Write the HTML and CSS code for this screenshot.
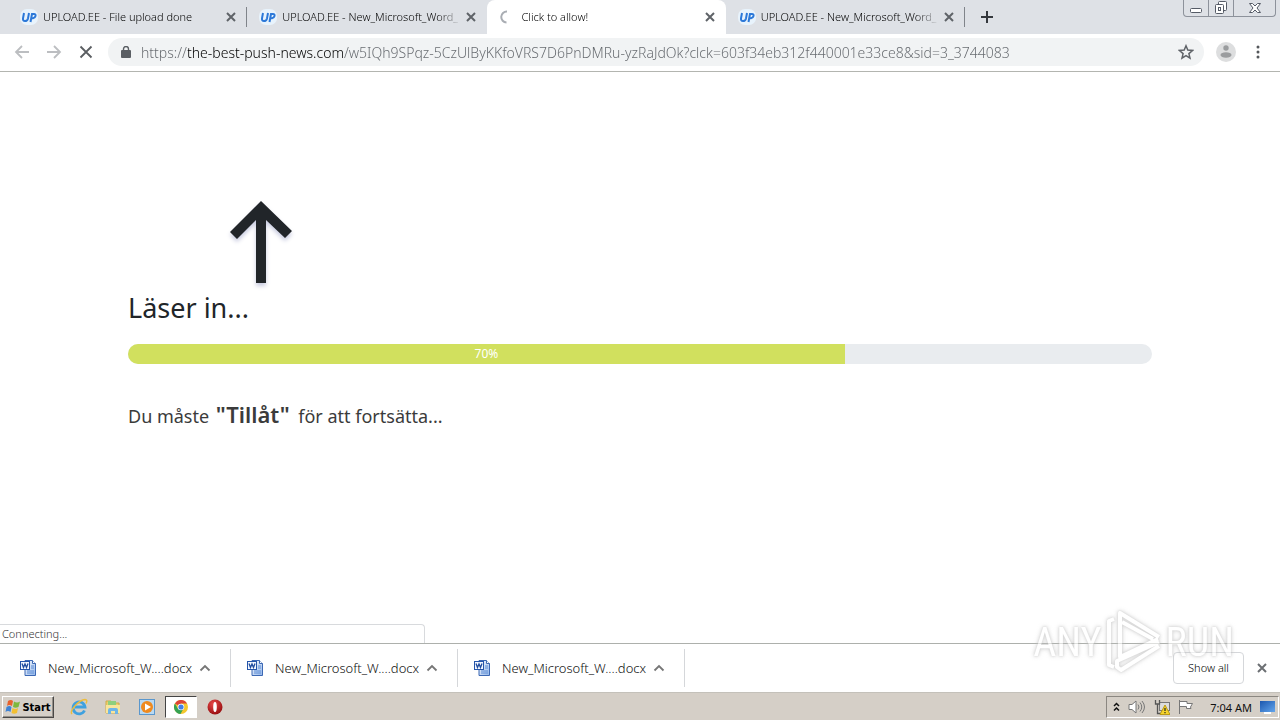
FILE: index.html
```html
<!DOCTYPE html>
<html lang="sv">
<head>
<meta charset="utf-8">
<meta name="viewport" content="width=device-width, initial-scale=1">
<title>Click to allow!</title>
<link rel="stylesheet" href="styles.css">
</head>
<body>
<svg class="defs" width="0" height="0" aria-hidden="true">
  <defs>
    <linearGradient id="page-blue" x1="0" y1="0" x2="1" y2="1"><stop offset="0" stop-color="#fff"/><stop offset="1" stop-color="#8fb4ea"/></linearGradient>
    <radialGradient id="opera-red" cx=".4" cy=".3" r=".8"><stop offset="0" stop-color="#e84a4a"/><stop offset="1" stop-color="#8e0608"/></radialGradient>
    <linearGradient id="screen-blue" x1="0" y1="0" x2="1" y2="1"><stop offset="0" stop-color="#1c57ae"/><stop offset="1" stop-color="#63a5ec"/></linearGradient>
    <symbol id="close" viewBox="0 0 10 10"><path d="M1 1l8 8M9 1l-8 8" fill="none" stroke="currentColor" stroke-width="2"/></symbol>
    <symbol id="up" viewBox="0 0 20 16"><rect x="1" y="0" width="18" height="16" rx="7" fill="#e8f3fc"/><g fill="none" stroke="#2c78d8" stroke-width="2"><path d="M5 4L4 9.400Q3.700 12 6 12T9 9.400L10 4"/><path d="M11.500 13L13 5H15Q17 5 16.500 7T14 9.300H12.400"/></g></symbol>
    <symbol id="word" viewBox="0 0 16 16"><path d="M5 .5h7.500l3 3v12H5z" fill="url(#page-blue)" stroke="#3c68b4"/><path d="M12.500.5v3h3" fill="#fff" stroke="#3c68b4"/><path d="M11 6h3M11 8h3M7 11h7M7 13h7" stroke="#5c8cd4"/><rect x=".5" y="1.500" width="9" height="8" fill="#f4f8ff" stroke="#2455aa"/><path d="M2 3.500l1.500 4L5 4l1.500 3.500 1.500-4" fill="none" stroke="#204d9f" stroke-width="1.300"/></symbol>
    <symbol id="chevron" viewBox="0 0 12 8"><path d="M1.500 6.500L6 2l4.500 4.500" fill="none" stroke="#767676" stroke-width="1.800"/></symbol>
  </defs>
</svg>
<div class="screen">
  <header>
    <div class="tabstrip">
      <div class="tabs">
        <div class="tab"><svg class="fav"><use href="#up"/></svg><span class="tab-title">UPLOAD.EE - File upload done</span><button class="tab-close" aria-label="Close tab"><svg><use href="#close"/></svg></button></div>
        <div class="tab no-sep"><svg class="fav"><use href="#up"/></svg><span class="tab-title">UPLOAD.EE - New_Microsoft_Word_</span><button class="tab-close" aria-label="Close tab"><svg><use href="#close"/></svg></button></div>
        <div class="tab active"><svg class="fav" viewBox="0 0 20 16"><path d="M9 2.500A5.500 5.500 0 0 0 8.500 13.500" fill="none" stroke="#a9adb3" stroke-width="2"/></svg><span class="tab-title">Click to allow!</span><button class="tab-close" aria-label="Close tab"><svg><use href="#close"/></svg></button></div>
        <div class="tab"><svg class="fav"><use href="#up"/></svg><span class="tab-title">UPLOAD.EE - New_Microsoft_Word_</span><button class="tab-close" aria-label="Close tab"><svg><use href="#close"/></svg></button></div>
      </div>
      <button class="new-tab" aria-label="New tab"><svg width="12" height="12" viewBox="0 0 12 12"><path d="M6 0v12M0 6h12" stroke="#34383d" stroke-width="2"/></svg></button>
      <div class="window-buttons">
        <button aria-label="Minimize"><svg width="14" height="14" viewBox="0 0 14 14"><rect x="1.500" y="7.500" width="11" height="4" rx="1" fill="#fff" stroke="#555b66"/></svg></button>
        <button aria-label="Restore"><svg width="14" height="14" viewBox="0 0 14 14" fill="#fff" stroke="#555b66"><rect x="4.500" y=".5" width="8" height="9" rx="1"/><rect x="1.500" y="3.500" width="8" height="9" rx="1"/><rect x="4.500" y="6.500" width="2" height="3"/></svg></button>
        <button aria-label="Close"><svg width="14" height="14" viewBox="0 0 14 14"><path d="M1.500 2.500h3L7 5l2.500-2.500h3L9 7l3.500 4.500h-3L7 9l-2.500 2.500h-3L5 7z" fill="#fff" stroke="#555b66"/></svg></button>
      </div>
    </div>
    <div class="toolbar">
      <button class="nav" aria-label="Back"><svg width="16" height="16" viewBox="0 0 16 16"><path d="M15 8H2M8 2L2 8l6 6" fill="none" stroke="#bcbec1" stroke-width="1.800"/></svg></button>
      <button class="nav" aria-label="Forward"><svg width="16" height="16" viewBox="0 0 16 16"><path d="M1 8h13M8 2l6 6-6 6" fill="none" stroke="#bcbec1" stroke-width="1.800"/></svg></button>
      <button class="nav" aria-label="Stop"><svg width="14" height="14" viewBox="0 0 14 14"><path d="M1.500 1.500l11 11M12.500 1.500l-11 11" stroke="#5a5d61" stroke-width="1.800"/></svg></button>
      <div class="omnibox">
        <svg width="10" height="12" viewBox="0 0 10 12"><rect y="4" width="10" height="8" rx="1" fill="#5a5e63"/><path d="M2.500 5V3a2.500 2.500 0 0 1 5 0v2" fill="none" stroke="#5a5e63" stroke-width="1.400"/></svg>
        <input class="url" type="text" aria-label="Address" value="https://the-best-push-news.com/w5IQh9SPqz-5CzUlByKKfoVRS7D6PnDMRu-yzRaJdOk?clck=603f34eb312f440001e33ce8&amp;sid=3_3744083">
        <button class="star" aria-label="Bookmark"><svg width="16" height="16" viewBox="0 0 16 16"><path d="M8 1.800l1.800 4.300 4.700.4-3.600 3.100 1.100 4.600L8 11.700l-4 2.500 1.100-4.600-3.600-3.100 4.700-.4z" fill="none" stroke="#5f6368" stroke-width="1.500"/></svg></button>
      </div>
      <button class="avatar" aria-label="Profile"><svg width="20" height="20" viewBox="0 0 20 20"><circle cx="10" cy="10" r="10" fill="#dddedf"/><circle cx="10" cy="6" r="2.700" fill="#9a9c9e"/><ellipse cx="10" cy="13" rx="5.500" ry="2.700" fill="#9a9c9e"/></svg></button>
      <button class="menu" aria-label="Menu"><svg width="4" height="14" viewBox="0 0 4 14" fill="#54575b"><circle cx="2" cy="2" r="1.500"/><circle cx="2" cy="7" r="1.500"/><circle cx="2" cy="12" r="1.500"/></svg></button>
    </div>
  </header>
  <main>
    <div class="content">
      <svg class="arrow" width="62" height="84" viewBox="0 0 62 84"><path d="M31 1L62 31l-7 7-19-18v63H26V20L7 39l-7-7z" fill="#212529"/></svg>
      <h1>Läser in...</h1>
      <div class="progress" role="progressbar" aria-label="Läser in" aria-valuenow="70" aria-valuemin="0" aria-valuemax="100"><div class="bar" style="width:70%">70%</div></div>
      <p>Du måste <strong>"Tillåt"</strong> för att fortsätta...</p>
    </div>
    <div class="status">Connecting...</div>
  </main>
  <div class="shelf">
    <div class="download"><svg class="doc"><use href="#word"/></svg><span>New_Microsoft_W....docx</span><button aria-label="Options"><svg width="12" height="8"><use href="#chevron"/></svg></button></div>
    <div class="download"><svg class="doc"><use href="#word"/></svg><span>New_Microsoft_W....docx</span><button aria-label="Options"><svg width="12" height="8"><use href="#chevron"/></svg></button></div>
    <div class="download"><svg class="doc"><use href="#word"/></svg><span>New_Microsoft_W....docx</span><button aria-label="Options"><svg width="12" height="8"><use href="#chevron"/></svg></button></div>
    <button class="show-all">Show all</button>
    <button class="shelf-close" aria-label="Close downloads"><svg width="10" height="10"><use href="#close"/></svg></button>
  </div>
  <footer class="taskbar">
    <button class="start"><svg width="16" height="16" viewBox="0 0 16 16"><path d="M3 2q3-2 5 0L7 7Q4 5 2 7z" fill="#e8622c"/><path d="M9 2.500q3 2 6 0L13.500 8q-3 1.500-5.500 0z" fill="#7eb83c"/><path d="M1.500 8q3-2 5 0L5.500 13q-2.500-2-5 0z" fill="#3f83d4"/><path d="M7.500 9q3 2 5.500 0L12 14q-3 1.500-5.500 0z" fill="#f3bf30"/></svg>Start</button>
    <div class="launch">
      <button aria-label="Internet Explorer"><svg width="18" height="18" viewBox="0 0 18 18"><path d="M14.500 12.500A6 6 0 1 1 15 9H5" fill="none" stroke="#3fa1df" stroke-width="2.800"/><path d="M2 16C-1 13 9 2 15 1.500q3 0 1 4" fill="none" stroke="#edbd3c" stroke-width="1.400"/></svg></button>
      <button aria-label="Explorer"><svg width="18" height="18" viewBox="0 0 18 18"><path d="M2 3h5l1 2h7v10H2z" fill="#edcf6c" stroke="#cfaa48"/><path d="M4 3h8v4H4z" fill="#8ecf7d"/><path d="M2 7h14v8H2z" fill="#f8e59b"/><path d="M4 16v-4q0-2 2-2h6q2 0 2 2v4h-3v-3H7v3z" fill="#6eb5e8"/></svg></button>
      <button aria-label="Media Player"><svg width="18" height="18" viewBox="0 0 18 18"><rect x="1.500" y="1.500" width="15" height="15" fill="#b9d9f2" stroke="#5a97cd"/><circle cx="9" cy="9" r="6" fill="#ef8a1f"/><path d="M7 5.500L13 9l-6 3.500z" fill="#fff"/></svg></button>
      <button class="pressed" aria-label="Chrome"><svg width="14" height="14" viewBox="0 0 14 14"><circle cx="7" cy="7" r="7" fill="#f4c72d"/><path d="M7 7L.9 3.500A7 7 0 0 1 13.100 3.500H7z" fill="#dd4437"/><path d="M.9 3.500A7 7 0 0 0 6.500 14L9.500 8.500 4 8.700z" fill="#35a253"/><circle cx="7" cy="7" r="3.300" fill="#fff"/><circle cx="7" cy="7" r="2.600" fill="#437fe6"/></svg></button>
      <button aria-label="Opera"><svg width="16" height="16" viewBox="0 0 16 16"><circle cx="8" cy="8" r="7.500" fill="url(#opera-red)"/><ellipse cx="8" cy="8" rx="1.800" ry="5" fill="#fff"/></svg></button>
    </div>
    <div class="tray">
      <svg width="7" height="10" viewBox="0 0 7 10"><path d="M1 4l2.500-2.500L6 4M1 8.500L3.500 6 6 8.500" fill="none" stroke="#111" stroke-width="1.500"/></svg>
      <svg width="18" height="16" viewBox="0 0 18 16"><path d="M1 5.500h3L8 2v12l-4-3.500H1z" fill="#fff" stroke="#777"/><path d="M10 5.500q2 2.500 0 5M12 3.500q3.500 4.500 0 9M14 2q5 6 0 12" fill="none" stroke="#777"/></svg>
      <svg width="16" height="16" viewBox="0 0 16 16"><rect x="5.500" y="3.500" width="10" height="8" fill="#ddd" stroke="#777"/><path d="M1.500 1v4h4V1M3.500 5v9.500h6" fill="none" stroke="#555" stroke-width="1.300"/><path d="M11 6l5 9.500H6z" fill="#f6d42b" stroke="#bb9a16"/><path d="M11 9v3M11 13v1.200" stroke="#222" stroke-width="1.200"/></svg>
      <svg width="16" height="16" viewBox="0 0 16 16"><path d="M1.500 1v14M2 2.500h7v2h5.500L12.500 8l.5 1.500H8.500v-2H2" fill="#fff" stroke="#777"/></svg>
      <time>7:04 AM</time>
      <svg width="15" height="13" viewBox="0 0 15 13"><rect width="15" height="11" fill="url(#screen-blue)"/><path d="M4 12h7" stroke="#fff" stroke-width="2"/></svg>
    </div>
  </footer>
  <div class="watermark" aria-hidden="true"><span>ANY</span><svg width="58" height="64" viewBox="0 0 58 64"><path d="M9 9L4 11v44l5 2M54 27L15 3v44l38-18M17 12l31 17M54 36L16 60l-4-3V51L54 32" fill="none" stroke="#fff" stroke-width="4" stroke-linejoin="round"/></svg><span>RUN</span></div>
</div>
</body>
</html>
```
FILE: styles.css
```css
* { box-sizing: border-box; }
body { margin: 0; font-family: "Noto Sans", "Open Sans", sans-serif; color: #212529; background: #fff; }
button { margin: 0; padding: 0; border: 0; background: none; font: inherit; color: inherit; display: flex; align-items: center; justify-content: center; }
svg { display: block; flex: none; }
.defs { position: absolute; }
.screen { position: relative; min-height: 100vh; display: flex; flex-direction: column; }

.tabstrip { display: flex; align-items: stretch; height: 34px; padding-left: 8px; background: #dee1e6; }
.tabs { display: flex; flex: 0 1 957px; min-width: 0; }
.tab { flex: 1 1 0; min-width: 0; display: flex; align-items: center; padding: 0 11px; font-size: 11px; font-weight: 300; color: #000; background: linear-gradient(#80848a, #80848a) right center / 1px 20px no-repeat; }
.tab.no-sep { background: none; }
.tab.active { background: #fff; border-radius: 8px 8px 0 0; }
.fav { width: 20px; height: 16px; }
.tab-title { flex: 1; min-width: 0; margin: 0 4px; line-height: 16px; white-space: nowrap; overflow: hidden; -webkit-mask-image: linear-gradient(to left, transparent, #000 24px); mask-image: linear-gradient(to left, transparent, #000 24px); }
.tab-close { width: 10px; height: 16px; color: #5f6368; }
.tab-close svg { width: 10px; height: 10px; }
.new-tab { width: 44px; }
.window-buttons { display: flex; height: 17px; margin: 0 4px 0 auto; border: 1px solid #8d929b; border-top: 0; border-radius: 0 0 4px 4px; overflow: hidden; }
.window-buttons button { width: 25px; border-right: 1px solid #8d929b; }
.window-buttons button:last-child { width: 41px; border-right: 0; }

.toolbar { display: flex; align-items: center; height: 38px; padding: 0 10px 1px 6px; border-bottom: 1px solid #b3b5b0; }
.nav { width: 32px; height: 28px; }
.omnibox { flex: 1; min-width: 0; display: flex; align-items: center; height: 28px; margin-left: 6px; padding: 0 10px 0 13px; border-radius: 14px; background: #f1f3f4; }
.url { flex: 1; min-width: 0; margin-left: 10px; padding: 0; border: 0; outline: 0; font: 300 14px "Noto Sans", "Open Sans", sans-serif; color: transparent; background: linear-gradient(to right, #63676c 47px, #000 47px, #000 203px, #63676c 203px); -webkit-background-clip: text; background-clip: text; }
.avatar { width: 20px; margin-left: 12px; }
.menu { width: 24px; height: 24px; margin-left: 10px; }

main { flex: 1; display: flex; flex-direction: column; }
.content { margin: 0 10%; padding-top: 128px; }
.arrow { margin-left: 10%; filter: drop-shadow(0 3px 2px #c8cbe0); }
h1 { margin: 4px 0 16px; font-size: 27px; font-weight: 400; line-height: 40px; }
.progress { height: 20px; border-radius: 10px; background: #e9ecef; overflow: hidden; }
.bar { height: 100%; background: #d1e05e; color: #fff; font-size: 12px; line-height: 20px; text-align: center; }
p { margin: 32px 0 0; font-size: 18px; line-height: 36px; color: #3b3b3b; }
strong { margin: 0 4px 0 2px; font-size: 22px; font-weight: 600; }
.status { width: 425px; max-width: 100%; height: 19px; margin-top: auto; padding-left: 2px; border: 1px solid #d8dadd; border-width: 1px 1px 0 0; border-radius: 0 4px 0 0; font-size: 11px; font-weight: 300; line-height: 18px; color: #333; }

.shelf { display: flex; align-items: center; height: 49px; padding-right: 13px; border-top: 1px solid #adb0ac; }
.download { display: flex; align-items: center; width: 227px; height: 38px; padding-left: 16px; border-right: 1px solid #d5d7da; font-size: 13px; font-weight: 300; color: #111; white-space: nowrap; }
.download:first-child { width: 231px; padding-left: 20px; }
.doc { width: 16px; height: 16px; }
.download span { flex: 0 0 152px; padding-left: 12px; }
.download button { width: 24px; height: 24px; margin-left: 1px; }
.show-all { width: 71px; height: 32px; margin-left: auto; padding-bottom: 2px; border: 1px solid #d5d7da; border-radius: 4px; font-size: 11px; font-weight: 300; color: #000; }
.shelf-close { width: 10px; height: 24px; margin-left: 13px; color: #6c6f73; }

.taskbar { display: flex; align-items: center; height: 28px; padding: 1px 1px 0 2px; border-top: 1px solid #c4c1ba; background: #d5cfc7; }
.start { width: 52px; height: 22px; gap: 1px; border: 1px solid; border-color: #fff #4a4846 #4a4846 #fff; box-shadow: inset -1px -1px #94908a; font: bold 11px "DejaVu Sans Condensed", "DejaVu Sans", sans-serif; color: #000; }
.launch { display: flex; align-items: center; margin-left: 9px; gap: 2px; }
.launch button { width: 32px; height: 22px; }
.launch .pressed { border: 1px solid; border-color: #444 #fff #fff #444; background: #fff; }
.tray { display: flex; align-items: center; gap: 8px; height: 22px; margin-left: auto; padding: 0 3px 0 6px; border: 1px solid; border-color: #8b8781 #fff #fff #8b8781; font-size: 11px; color: #111; }
.tray time { margin: 0 0 0 8px; white-space: nowrap; }

.watermark { position: absolute; right: 46px; bottom: 46px; display: flex; align-items: center; gap: 3px; height: 64px; pointer-events: none; color: #fff; opacity: .6; font: 40px "Roboto Condensed", "Open Sans Condensed", "DejaVu Sans Condensed", sans-serif; filter: drop-shadow(0 0 1px #bbb) drop-shadow(0 0 2px #bbb); }
```
